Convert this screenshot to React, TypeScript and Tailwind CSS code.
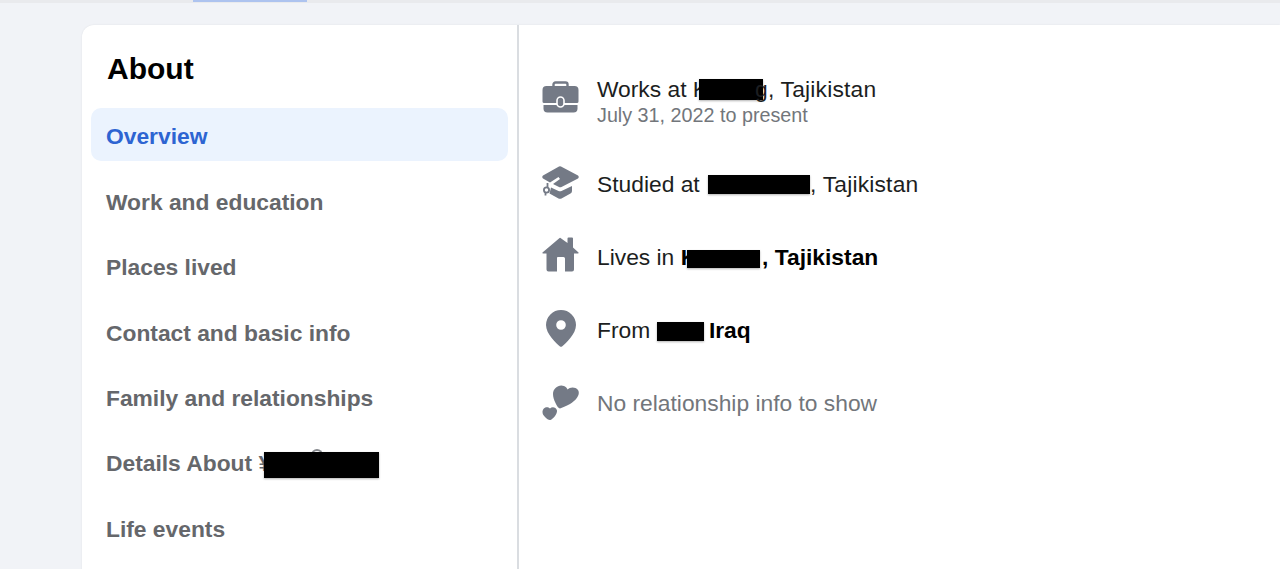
const iconFill = "#747a86";

function Briefcase() {
  return (
    <svg width="37" height="33" viewBox="0 0 37 33" className="block">
      <path d="M11.500 6V3.500A2 2 0 0 1 13.500 1.500H23.500A2 2 0 0 1 25.500 3.500V6" fill="none" stroke={iconFill} strokeWidth="2.400" />
      <path d="M4.500 5H32.500A4 4 0 0 1 36.500 9V20.500Q36.500 22 35 22H2Q0.500 22 0.500 20.500V9A4 4 0 0 1 4.500 5Z" fill={iconFill} />
      <path d="M1.500 24H35.500V27.500A4 4 0 0 1 31.500 31.500H5.500A4 4 0 0 1 1.500 27.500Z" fill={iconFill} />
      <rect x="15" y="16" width="7" height="10" rx="3.500" fill={iconFill} stroke="#ffffff" strokeWidth="1.600" />
    </svg>
  );
}

function Cap() {
  return (
    <svg width="37" height="34" viewBox="0 0 37 34" className="block">
      <path d="M17 0.500Q18 0 19 0.500L36 9.500Q37.500 11 36 12.500L19.500 21Q18 21.500 17 21L11 18L18 13L16.500 11L8 16.500L1 12.500Q-0.500 11 1 9.500Z" fill={iconFill} />
      <path d="M9 21.500L16.500 25Q18 25.700 19.500 25L30 20V25Q30 26.500 28.500 27.500L19.500 32.500Q18 33.200 16.500 32.500L7.500 27.500Z" fill={iconFill} />
      <circle cx="4.500" cy="24" r="2.600" fill="none" stroke={iconFill} strokeWidth="1.800" />
      <path d="M5.500 17V21M3.500 26.500V29.500" stroke={iconFill} strokeWidth="1.800" fill="none" />
    </svg>
  );
}

function House() {
  return (
    <svg width="37" height="35" viewBox="0 0 37 35" className="block">
      <path d="M18.500 1L25.500 6V1.500Q25.500 0.500 26.500 0.500H30Q31 0.500 31 1.500V10.500L36.500 15.500Q37 16.500 36 16.500H32V32.500Q32 34.500 30 34.500H23V21.500Q23 20 21.500 20H15.500Q15 20 15 21.500V34.500H6.500Q4.500 34.500 4.500 32.500V16.500H1Q0 16.500 0.500 15.500L17 1.500Q18 0.500 18.500 1Z" fill={iconFill} />
    </svg>
  );
}

function Pin() {
  return (
    <svg width="30" height="37" viewBox="0 0 30 37" className="block">
      <path fillRule="evenodd" d="M15 0A15 15 0 0 1 30 15C30 24 20 33 16 36.500Q15 37.200 14 36.500C10 33 0 24 0 15A15 15 0 0 1 15 0ZM15 10.200A4.800 4.800 0 1 0 15 19.800A4.800 4.800 0 1 0 15 10.200Z" fill={iconFill} />
    </svg>
  );
}

function Hearts() {
  return (
    <svg width="37" height="36" viewBox="0 0 37 36" className="block">
      <path d="M11 9C11 3 17 -1 22 1C24 2 25 3 25.500 4.500C28 2 33 1.500 36 5C38.500 9 35 15 28 19C24 21 20 23 18 23.500C16.500 23.500 15 21 13.500 18C12 15 11 12 11 9Z" fill={iconFill} />
      <path d="M0.500 27C0.500 23 5 20.500 8 23.500C10 21.500 14 22 15 25.500C15.500 29 11 34 8.500 35C7 35.500 5 34 3 32C1.500 30.500 0.500 29 0.500 27Z" fill={iconFill} />
    </svg>
  );
}

function Box({ w, h, className }: { w: number; h: number; className: string }) {
  return (
    <span
      className={`inline-block bg-black align-middle shadow-[0_1px_2px_rgba(0,0,0,0.3)] ${className}`}
      style={{ width: w, height: h }}
    />
  );
}

const navItems = [
  "Work and education",
  "Places lived",
  "Contact and basic info",
  "Family and relationships",
];

function NavRow({ children }: { children: React.ReactNode }) {
  return (
    <div className="flex h-[53px] items-center rounded-[10px] px-[15px] pt-[4px] text-[22.800px] font-bold text-[#65676b]">
      {children}
    </div>
  );
}

function InfoRow({ icon, iconClass, rowClass, textClass, children }: { icon: React.ReactNode; iconClass: string; rowClass: string; textClass: string; children: React.ReactNode }) {
  return (
    <div className={`flex items-start ${rowClass}`}>
      <div className={`flex w-[37px] shrink-0 justify-center ${iconClass}`}>{icon}</div>
      <div className={`ml-[18px] min-w-0 ${textClass}`}>{children}</div>
    </div>
  );
}

export default function App() {
  return (
    <div className="h-[569px] overflow-hidden bg-[#f1f3f7] font-['Liberation_Sans',Arial,sans-serif]">
      <div className="h-[3px] bg-[#e9eaed]">
        <div className="ml-[193px] h-[1.500px] w-[114px] bg-[#adc3ef]" />
      </div>
      <div className="ml-[82px] mt-[22px] flex h-[600px] rounded-tl-[12px] bg-white shadow-[0_0_2px_rgba(0,0,0,0.08)]">
        <div className="w-[437px] shrink-0 border-r-2 border-[#dadde1] pl-[9px] pr-[9px]">
          <h1 className="mb-[20px] mt-[24px] pl-[16px] text-[30px] font-bold leading-[39px] text-black">About</h1>
          <div className="flex flex-col gap-[12.500px]">
            <div className="flex h-[53px] items-center rounded-[10px] bg-[#ebf3fe] px-[15px] pt-[4px] text-[22.800px] font-bold text-[#2d64d2]">
              Overview
            </div>
            {navItems.map((t) => (
              <NavRow key={t}>{t}</NavRow>
            ))}
            <NavRow>
              <span className="whitespace-nowrap">
                Details About ¥
                <span className="relative inline-block align-middle">
                  <span className="absolute left-[40px] top-[1px] h-[6px] w-[12px] rounded-t-full border-2 border-b-0 border-[#85888d]" />
                  <Box w={115} h={26} className="relative -ml-[7px] -mt-[4px] block" />
                </span>
              </span>
            </NavRow>
            <NavRow>Life events</NavRow>
          </div>
        </div>
        <div className="flex min-w-0 flex-1 flex-col gap-[37px] pl-[23px] pt-[51px] text-[22.800px] leading-[26px] text-[#1c1e21]">
          <InfoRow icon={<Briefcase />} iconClass="mt-[5px]" rowClass="h-[53px]" textClass="">
            <div className="mb-[2px] whitespace-nowrap">
              Works at K
              <Box w={64} h={21} className="-ml-[9px] -mt-[2px]" />
              <span className="-ml-[8px] tracking-[0.200px]">g, Tajikistan</span>
            </div>
            <div className="text-[19.750px] leading-[22px] text-[#72767b]">July 31, 2022 to present</div>
          </InfoRow>
          <InfoRow icon={<Cap />} iconClass="" rowClass="h-[36px]" textClass="self-center">
            <div className="whitespace-nowrap">
              Studied at&nbsp;
              <Box w={102} h={19} className="ml-[2px] -mt-[2px]" />
              <span className="tracking-[0.200px]">, Tajikistan</span>
            </div>
          </InfoRow>
          <InfoRow icon={<House />} iconClass="-mt-[2px]" rowClass="h-[36px]" textClass="self-center">
            <div className="whitespace-nowrap">
              Lives in <b className="font-bold text-black">K<Box w={73} h={18} className="-ml-[10px] mt-[1px]" /><span className="ml-[2px]">, Tajikistan</span></b>
            </div>
          </InfoRow>
          <InfoRow icon={<Pin />} iconClass="-mt-[2px]" rowClass="h-[36px]" textClass="self-center">
            <div className="whitespace-nowrap">
              From <Box w={47} h={19} className="" /> <b className="-ml-[1px] font-bold text-black">Iraq</b>
            </div>
          </InfoRow>
          <InfoRow icon={<Hearts />} iconClass="" rowClass="h-[36px]" textClass="self-center">
            <div className="whitespace-nowrap text-[#72767b]">No relationship info to show</div>
          </InfoRow>
        </div>
      </div>
    </div>
  );
}
